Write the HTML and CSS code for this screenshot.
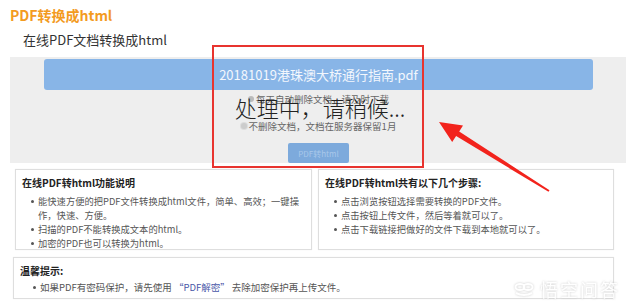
FILE: index.html
```html
<!DOCTYPE html>
<html lang="zh-CN">
<head>
<meta charset="utf-8">
<title>PDF转换成html</title>
<link rel="stylesheet" href="styles.css">
</head>
<body>
<div class="page">
  <header class="page-head">
    <h1 class="title">PDF转换成html</h1>
    <p class="subtitle">在线PDF文档转换成html</p>
  </header>

  <section class="converter">
    <div class="file-bar">20181019港珠澳大桥通行指南.pdf</div>
    <div class="options">
      <div class="option"><span class="radio"></span>每天自动删除文档，请及时下载</div>
      <div class="option"><span class="radio on"></span>不删除文档，文档在服务器保留1月</div>
    </div>
    <div class="actions"><button class="convert-btn">PDF转html</button></div>
  </section>

  <div class="info-row">
    <div class="info-box">
      <h3 class="box-title">在线PDF转html功能说明</h3>
      <ul class="box-list">
        <li>能快速方便的把PDF文件转换成html文件，简单、高效；一键操作，快速、方便。</li>
        <li>扫描的PDF不能转换成文本的html。</li>
        <li>加密的PDF也可以转换为html。</li>
      </ul>
    </div>
    <div class="info-box">
      <h3 class="box-title">在线PDF转html共有以下几个步骤:</h3>
      <ul class="box-list">
        <li>点击浏览按钮选择需要转换的PDF文件。</li>
        <li>点击按钮上传文件，然后等着就可以了。</li>
        <li>点击下载链接把做好的文件下载到本地就可以了。</li>
      </ul>
    </div>
  </div>

  <div class="tip-row">
    <div class="info-box tip-box">
      <h3 class="box-title">温馨提示:</h3>
      <ul class="box-list">
        <li>如果PDF有密码保护，请先使用 <span class="link">“PDF解密”</span> 去除加密保护再上传文件。</li>
      </ul>
    </div>
  </div>

  <div class="processing">
    <div class="processing-text">处理中，请稍候...</div>
  </div>

  <svg class="arrow" width="640" height="306" viewBox="0 0 640 306">
    <polygon points="439,122 463,125.5 459.2,131.4 549.5,190.2 548.5,191.8 456.1,136.1 452.2,142" fill="#f2231c"/>
  </svg>

  <div class="watermark">
    <svg class="wm-logo" width="20" height="14" viewBox="0 0 20 14">
      <ellipse cx="6" cy="5" rx="4.5" ry="3" fill="none" stroke="#fff" stroke-width="2"/>
      <ellipse cx="14" cy="5" rx="4.5" ry="3" fill="none" stroke="#fff" stroke-width="2"/>
      <path d="M2 11 Q10 15 18 11" fill="none" stroke="#fff" stroke-width="2"/>
    </svg>
    <span class="wm-text">悟空问答</span>
  </div>
</div>
</body>
</html>
```

FILE: styles.css
```css
* { box-sizing: border-box; }
html, body { margin: 0; padding: 0; background: #fff; }
body {
  font-family: "Noto Sans CJK SC", "Liberation Sans", sans-serif;
  color: #333;
  width: 640px;
  height: 306px;
  overflow: hidden;
}
.page { position: relative; width: 640px; height: 306px; }

.page-head { padding: 5px 0 0 10px; }
.title {
  margin: 0;
  font-size: 14px;
  line-height: 20px;
  font-weight: bold;
  color: #f39b1f;
}
.subtitle {
  margin: 5px 0 0 13px;
  font-size: 13px;
  line-height: 20px;
  color: #333;
}

.converter {
  margin: 7px 14px 0 10px;
  height: 106px;
  background: #eeeeee;
  padding: 2px 33px 0 34px;
  display: flex;
  flex-direction: column;
}
.file-bar {
  height: 31px;
  background: #88b5e7;
  border-radius: 3px;
  color: #f3f7fd;
  font-size: 13px;
  line-height: 31px;
  text-align: center;
}
.options {
  display: flex;
  flex-direction: column;
  align-items: center;
  margin-top: 2px;
  gap: 13px;
  color: #666;
  font-size: 9.5px;
  line-height: 14px;
}
.option { display: flex; align-items: center; gap: 2px; }
.radio {
  width: 6px; height: 6px; border-radius: 50%;
  background: #bbb;
  display: inline-block;
}
.radio.on { background: #ccc; box-shadow: 0 0 0 1px #ddd; }
.actions { display: flex; justify-content: center; margin-top: 10px; }
.convert-btn {
  width: 61px;
  height: 20px;
  border: 0;
  border-radius: 2px;
  background: #7daadc;
  color: #a9c8ea;
  font-family: inherit;
  font-size: 8px;
  padding: 0;
}

.info-row {
  margin: 6px 26px 0 15px;
  display: grid;
  grid-template-columns: 297px 1fr;
  gap: 6px;
}
.info-box {
  border: 1px solid #dedede;
  box-shadow: 0 0 1px #eee;
  background: #fff;
  height: 81px;
  padding: 5px 0 0 6px;
}
.box-title {
  margin: 0;
  font-size: 10px;
  font-weight: bold;
  line-height: 16px;
  color: #222;
}
.box-list {
  margin: 3px 0 0 0;
  padding: 0 0 0 10px;
  list-style: none;
  font-size: 9.3px;
  line-height: 14px;
  color: #555;
}
.box-list li { position: relative; padding-left: 6px; }
.box-list li::before {
  content: "";
  position: absolute;
  left: -1px; top: 6px;
  width: 3px; height: 3px;
  border-radius: 50%;
  background: #555;
}
.tip-row { margin: 7px 26px 0 13px; }
.tip-box { height: 42px; padding-top: 5px; }
.tip-box .box-list { margin-top: 1px; padding-left: 14px; font-size: 9.5px; }
.link { color: #4a58a8; }

.processing {
  position: absolute;
  left: 212px;
  top: 45px;
  width: 212px;
  height: 123px;
  border: 2px solid #e8342f;
  display: flex;
  align-items: center;
  justify-content: center;
  padding-top: 1px;
}
.processing-text {
  font-size: 22px;
  line-height: 26px;
  font-weight: 300;
  color: #222;
  padding-left: 4px;
}

.arrow { position: absolute; left: 0; top: 0; pointer-events: none; }

.watermark {
  position: absolute;
  left: 514px;
  top: 278px;
  display: flex;
  align-items: center;
  gap: 6px;
  opacity: 0.85;
  filter: drop-shadow(0 0 1px #c4c4c4);
}
.wm-text {
  font-size: 18px;
  line-height: 22px;
  color: #fff;
  letter-spacing: 2px;
}
```
